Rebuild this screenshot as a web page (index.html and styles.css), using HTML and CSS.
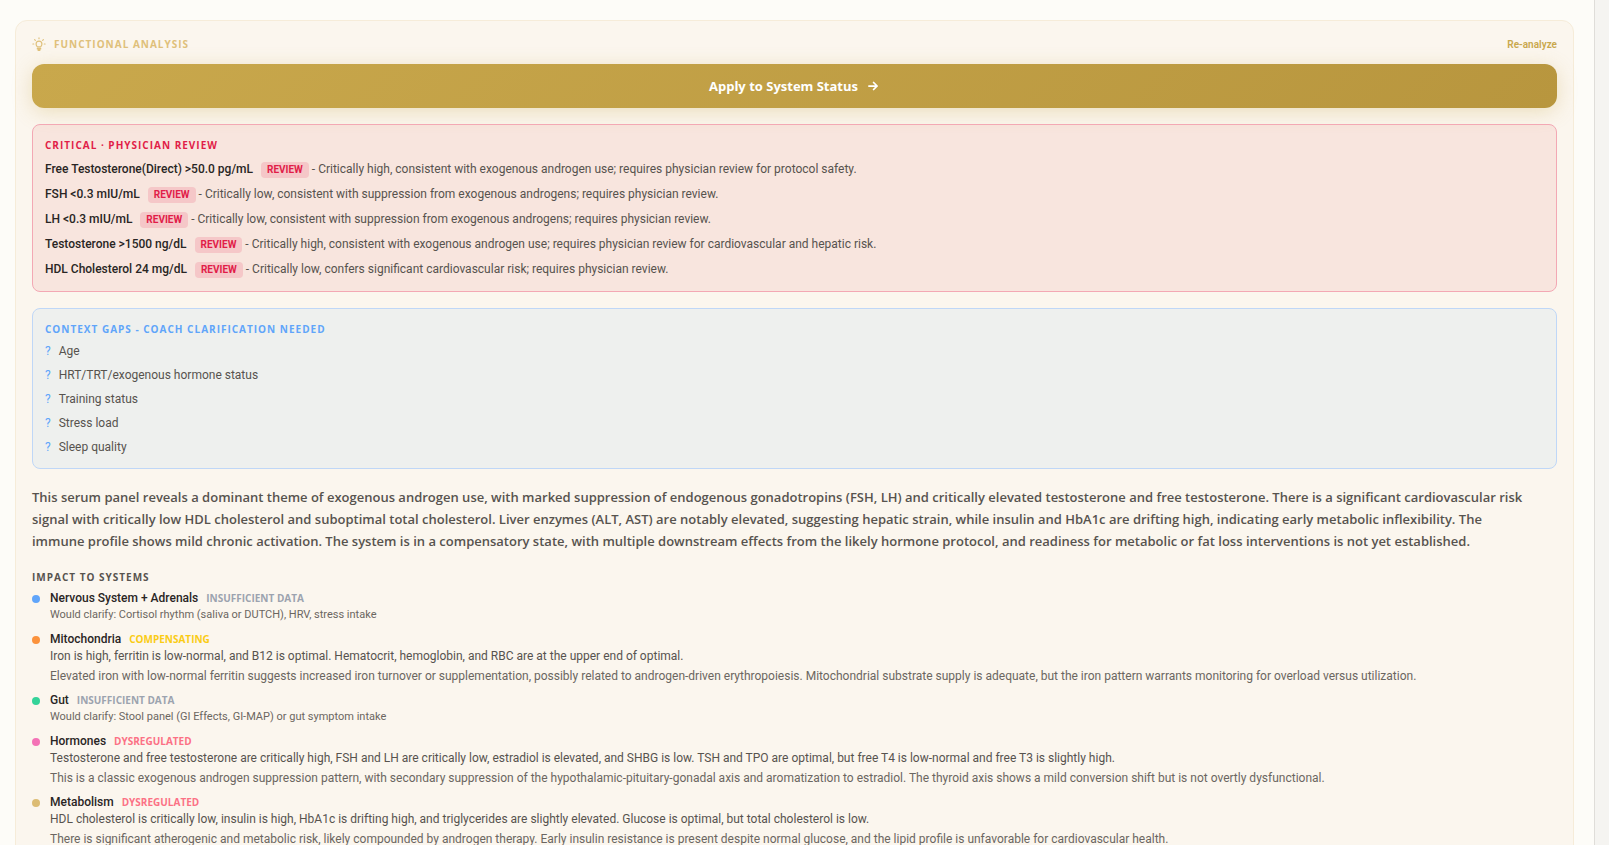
FILE: index.html
```
<!DOCTYPE html>
<html lang="en">
<head>
    <meta charset="UTF-8">
    <meta name="viewport" content="width=device-width, initial-scale=1.0">
    <title>Functional Analysis</title>
    <link rel="stylesheet" href="styles.css">
</head>
<body>
    <main class="page">
        <section class="card">
            <header class="card-header">
                <svg class="bulb" viewBox="0 0 24 24" width="14" height="14" fill="none" stroke="currentColor" stroke-width="2" stroke-linecap="round" stroke-linejoin="round" aria-hidden="true">
                    <path d="M12 1.500v1.500M4.500 4.500l1.200 1.200M19.500 4.500l-1.200 1.200M1.500 12H3M21 12h1.500"/>
                    <path d="M9 17c-.3-1.500-2-2.400-2-5a5 5 0 0 1 10 0c0 2.600-1.700 3.500-2 5z"/>
                    <path d="M9.500 20h5M11 22.500h2" stroke-width="3"/>
                </svg>
                <h2 class="card-title">Functional Analysis</h2>
                <button type="button" class="reanalyze">Re-analyze</button>
            </header>

            <button type="button" class="apply-btn">
                Apply to System Status
                <svg viewBox="0 0 24 24" width="14" height="14" fill="none" stroke="currentColor" stroke-width="3" stroke-linecap="round" stroke-linejoin="round" aria-hidden="true">
                    <path d="M5 12h14M13 6l6 6-6 6"/>
                </svg>
            </button>

            <section class="box critical">
                <h3 class="label">Critical · Physician Review</h3>
                <ul class="critical-list">
                    <li><strong>Free Testosterone(Direct) &gt;50.0 pg/mL</strong> <span class="tag">REVIEW</span> - Critically high, consistent with exogenous androgen use; requires physician review for protocol safety.</li>
                    <li><strong>FSH &lt;0.3 mIU/mL</strong> <span class="tag">REVIEW</span> - Critically low, consistent with suppression from exogenous androgens; requires physician review.</li>
                    <li><strong>LH &lt;0.3 mIU/mL</strong> <span class="tag">REVIEW</span> - Critically low, consistent with suppression from exogenous androgens; requires physician review.</li>
                    <li><strong>Testosterone &gt;1500 ng/dL</strong> <span class="tag">REVIEW</span> - Critically high, consistent with exogenous androgen use; requires physician review for cardiovascular and hepatic risk.</li>
                    <li><strong>HDL Cholesterol 24 mg/dL</strong> <span class="tag">REVIEW</span> - Critically low, confers significant cardiovascular risk; requires physician review.</li>
                </ul>
            </section>

            <section class="box context">
                <h3 class="label">Context Gaps - Coach Clarification Needed</h3>
                <ul class="context-list">
                    <li><span class="q">?</span>Age</li>
                    <li><span class="q">?</span>HRT/TRT/exogenous hormone status</li>
                    <li><span class="q">?</span>Training status</li>
                    <li><span class="q">?</span>Stress load</li>
                    <li><span class="q">?</span>Sleep quality</li>
                </ul>
            </section>

            <p class="summary">This serum panel reveals a dominant theme of exogenous androgen use, with marked suppression of endogenous gonadotropins (FSH, LH) and critically elevated testosterone and free testosterone. There is a significant cardiovascular risk signal with critically low HDL cholesterol and suboptimal total cholesterol. Liver enzymes (ALT, AST) are notably elevated, suggesting hepatic strain, while insulin and HbA1c are drifting high, indicating early metabolic inflexibility. The immune profile shows mild chronic activation. The system is in a compensatory state, with multiple downstream effects from the likely hormone protocol, and readiness for metabolic or fat loss interventions is not yet established.</p>

            <h3 class="label impact-label">Impact to Systems</h3>
            <ul class="systems">
                <li class="system nervous">
                    <h4>Nervous System + Adrenals <span class="status none">Insufficient data</span></h4>
                    <p class="clarify">Would clarify: Cortisol rhythm (saliva or DUTCH), HRV, stress intake</p>
                </li>
                <li class="system mito">
                    <h4>Mitochondria <span class="status comp">Compensating</span></h4>
                    <p class="finding">Iron is high, ferritin is low-normal, and B12 is optimal. Hematocrit, hemoglobin, and RBC are at the upper end of optimal.</p>
                    <p class="detail">Elevated iron with low-normal ferritin suggests increased iron turnover or supplementation, possibly related to androgen-driven erythropoiesis. Mitochondrial substrate supply is adequate, but the iron pattern warrants monitoring for overload versus utilization.</p>
                </li>
                <li class="system gut">
                    <h4>Gut <span class="status none">Insufficient data</span></h4>
                    <p class="clarify">Would clarify: Stool panel (GI Effects, GI-MAP) or gut symptom intake</p>
                </li>
                <li class="system hormones">
                    <h4>Hormones <span class="status dys">Dysregulated</span></h4>
                    <p class="finding">Testosterone and free testosterone are critically high, FSH and LH are critically low, estradiol is elevated, and SHBG is low. TSH and TPO are optimal, but free T4 is low-normal and free T3 is slightly high.</p>
                    <p class="detail">This is a classic exogenous androgen suppression pattern, with secondary suppression of the hypothalamic-pituitary-gonadal axis and aromatization to estradiol. The thyroid axis shows a mild conversion shift but is not overtly dysfunctional.</p>
                </li>
                <li class="system metabolism">
                    <h4>Metabolism <span class="status dys">Dysregulated</span></h4>
                    <p class="finding">HDL cholesterol is critically low, insulin is high, HbA1c is drifting high, and triglycerides are slightly elevated. Glucose is optimal, but total cholesterol is low.</p>
                    <p class="detail">There is significant atherogenic and metabolic risk, likely compounded by androgen therapy. Early insulin resistance is present despite normal glucose, and the lipid profile is unfavorable for cardiovascular health.</p>
                </li>
            </ul>
        </section>
    </main>
    <div class="gutter"></div>
</body>
</html>
```

FILE: styles.css
```
* { box-sizing: border-box; margin: 0; padding: 0; }
body { display: flex; height: 100vh; overflow: hidden; background: #fdfcf8; color: #57534e; font-family: Roboto, "Open Sans", sans-serif; font-size: 12px; }
ul { list-style: none; }
button { border: none; cursor: pointer; }
.card-title, .label, .apply-btn, .summary, .status { font-family: "Open Sans", "Noto Sans", sans-serif; }

.page { flex: 1; min-width: 0; overflow: hidden; padding: 20px 20px 0 15px; }
.gutter { width: 15px; background: #f5f4f1; border-left: 1px solid #dfddd9; }

.card { padding: 15px 16px 16px; background: #fbf6ee; border: 1px solid #f6ecd9; border-radius: 12px; }
.card-header { display: flex; align-items: center; height: 16px; margin-bottom: 12px; color: #dfc07a; }
.bulb { margin-right: 8px; }
.card-title { flex: 1; font-size: 10px; font-weight: 700; letter-spacing: 1px; text-transform: uppercase; }
.reanalyze { background: none; color: #c9a84c; font-family: inherit; font-size: 10px; font-weight: 600; }

.apply-btn { display: flex; align-items: center; justify-content: center; gap: 8px; width: 100%; height: 44px; background: linear-gradient(135deg, #c9a84c, #b8963e); color: #fff; border-radius: 12px; box-shadow: 0 4px 20px rgba(201, 168, 76, 0.3); font-size: 13px; font-weight: 700; }

.label { font-size: 10px; line-height: 16px; font-weight: 700; letter-spacing: 1px; text-transform: uppercase; }
.box { margin-top: 16px; padding: 12px 12px 11px; border: 1px solid; border-radius: 8px; }

.critical { background: rgba(220, 38, 38, 0.08); border-color: #f3a8b4; }
.critical .label { color: #e11d48; }
.critical-list { display: grid; gap: 5px; margin-top: 6px; padding-bottom: 1px; line-height: 20px; }
.critical-list strong { color: #292524; font-weight: 500; margin-right: 5px; }
.tag { display: inline-block; padding: 0 6px; background: rgba(225, 29, 72, 0.15); border-radius: 4px; color: #e11d48; font-size: 10px; line-height: 16px; font-weight: 700; }

.context { background: #eef0ee; border-color: #bfd7f7; }
.context .label { color: #60a5fa; }
.context-list { display: grid; gap: 4px; margin-top: 4px; line-height: 20px; }
.context-list li { display: flex; gap: 8px; }
.q { color: #60a5fa; }

.summary { margin-top: 17px; padding-right: 24px; font-size: 13px; line-height: 22px; font-weight: 600; }

.impact-label { margin-top: 17px; }
.systems { display: grid; gap: 7px; margin-top: 4px; }
.system { position: relative; padding-left: 18px; }
.system::before { content: ""; position: absolute; left: 0; top: 6px; width: 8px; height: 8px; border-radius: 50%; background: currentColor; }
.system h4 { display: flex; align-items: center; gap: 8px; color: #292524; font-size: 12px; line-height: 18px; font-weight: 500; }
.system p { color: #57534e; line-height: 16px; }
.system .detail { margin-top: 4px; color: #6b6661; }
.system .clarify { color: #6b6661; font-size: 11px; }
.nervous { color: #60a5fa; }
.mito { color: #fb923c; }
.gut { color: #34d399; }
.hormones { color: #f472b6; }
.metabolism { color: #dcbc74; }

.status { font-size: 10px; font-weight: 700; text-transform: uppercase; }
.none { color: #9ca3af; }
.comp { color: #facc15; }
.dys { color: #fb7185; }
```
